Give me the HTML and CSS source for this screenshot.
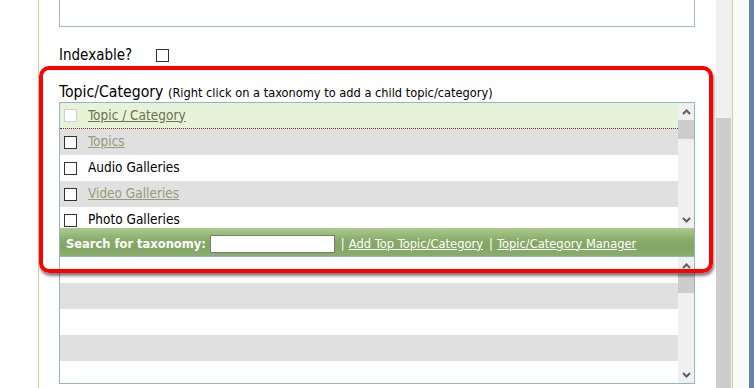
FILE: index.html
```html
<!DOCTYPE html>
<html lang="en">
<head>
    <meta charset="UTF-8">
    <title>Content Item - Taxonomy</title>
    <link rel="stylesheet" href="styles.css">
</head>
<body>
    <div class="screen">
        <div class="gutter"></div>

        <div class="panel">
            <div class="content">
                <!-- bottom of the description field -->
                <div class="desc-box"></div>

                <div class="field-row">
                    <span class="field-label">Indexable?</span>
                    <span class="cb"></span>
                </div>

                <div class="field-title">Topic/Category <span class="hint">(Right click on a taxonomy to add a child topic/category)</span></div>

                <div class="tax-box">
                    <div class="list list-top">
                        <div class="rows">
                            <div class="row head"><span class="cb disabled"></span><a href="#">Topic / Category</a></div>
                            <div class="row alt"><span class="cb"></span><a href="#">Topics</a></div>
                            <div class="row"><span class="cb"></span><span>Audio Galleries</span></div>
                            <div class="row alt"><span class="cb"></span><a href="#">Video Galleries</a></div>
                            <div class="row"><span class="cb"></span><span>Photo Galleries</span></div>
                        </div>
                        <div class="vscroll">
                            <div class="sb-btn"><svg width="9" height="6" viewBox="0 0 9 6"><path d="M1 5 L4.5 1.5 L8 5" fill="none" stroke="#5f5f5f" stroke-width="2"/></svg></div>
                            <div class="sb-thumb"></div>
                            <div class="sb-fill"></div>
                            <div class="sb-btn"><svg width="9" height="6" viewBox="0 0 9 6"><path d="M1 1 L4.5 4.5 L8 1" fill="none" stroke="#5f5f5f" stroke-width="2"/></svg></div>
                        </div>
                    </div>

                    <div class="tax-bar">
                        <b>Search for taxonomy:</b>
                        <span class="tax-search"></span>
                        <span class="sep">|</span>
                        <a href="#">Add Top Topic/Category</a>
                        <span class="sep">|</span>
                        <a href="#">Topic/Category Manager</a>
                    </div>

                    <div class="list list-bottom">
                        <div class="rows">
                            <div class="row"></div>
                            <div class="row alt"></div>
                            <div class="row"></div>
                            <div class="row alt"></div>
                            <div class="row"></div>
                        </div>
                        <div class="vscroll">
                            <div class="sb-btn"><svg width="9" height="6" viewBox="0 0 9 6"><path d="M1 5 L4.5 1.5 L8 5" fill="none" stroke="#5f5f5f" stroke-width="2"/></svg></div>
                            <div class="sb-thumb"></div>
                            <div class="sb-fill"></div>
                            <div class="sb-btn"><svg width="9" height="6" viewBox="0 0 9 6"><path d="M1 1 L4.5 4.5 L8 1" fill="none" stroke="#5f5f5f" stroke-width="2"/></svg></div>
                        </div>
                    </div>
                </div>
            </div>

            <div class="page-scroll"><div class="page-thumb"></div></div>
        </div>

        <div class="edge"></div>
        <div class="frame"></div>

        <!-- red highlight drawn over the screenshot -->
        <div class="callout"></div>
    </div>
</body>
</html>
```

FILE: styles.css
```css
* {
    box-sizing: border-box;
}
body {
    margin: 0;
    background: #fff;
    color: #000;
    font-family: "DejaVu Sans Condensed", "DejaVu Sans", sans-serif;
    font-stretch: condensed;
}
.screen {
    position: relative;
    display: flex;
    width: 754px;
    height: 388px;
    overflow: hidden;
}
.gutter {
    width: 38px;
    flex: none;
}
.panel {
    display: flex;
    width: 695px;
    flex: none;
    border-left: 1px solid #c4d79c;
    border-right: 1px solid #c4d79c;
}
.content {
    flex: 1;
    padding: 0 21px 0 20px;
}
.page-scroll {
    display: flex;
    flex-direction: column;
    width: 16px;
    padding-top: 118px;
    background: #f0f0f0;
}
.page-thumb {
    flex: 1;
    margin-right: 1px;
    background: #cdcdcd;
}
.edge {
    width: 16px;
    flex: none;
    background: #fafafa;
}
.frame {
    width: 5px;
    flex: none;
    background: #6683a5;
}
.desc-box {
    height: 27px;
    border: 1px solid #a0bccc;
    border-top: none;
}
.field-row {
    display: flex;
    align-items: center;
    height: 17px;
    margin-top: 20px;
}
.field-label {
    width: 97px;
    font-size: 15px;
    line-height: 17px;
}
.cb {
    width: 13px;
    height: 13px;
    flex: none;
    border: 1px solid #333;
    background: #fff;
}
.cb.disabled {
    border-color: #cfcfcf;
}
.field-title {
    margin-top: 19px;
    font-size: 15.7px;
    line-height: 18px;
    white-space: nowrap;
}
.hint {
    font-size: 12.7px;
}
.tax-box {
    border: 1px solid #96b4c8;
}
.list {
    display: flex;
}
.list-top {
    height: 125px;
}
.list-bottom {
    height: 126px;
}
.rows {
    flex: 1;
    overflow: hidden;
}
.row {
    display: flex;
    align-items: center;
    height: 26px;
    padding-left: 4px;
    font-size: 13.5px;
    white-space: nowrap;
}
.row .cb {
    margin-right: 11px;
}
.row a,
.row span + span {
    margin-top: -2px;
}
.row.head {
    background: #e7f3d8;
    border-bottom: 1px dotted #8b1a1a;
}
.row.alt {
    background: #e0e0e0;
}
.row a {
    color: #9a9a7a;
    text-decoration: underline;
}
.row.head a {
    color: #6e6e50;
}
.vscroll {
    display: flex;
    flex-direction: column;
    width: 16px;
    background: #f0f0f0;
}
.sb-btn {
    display: flex;
    align-items: center;
    justify-content: center;
    height: 17px;
}
.sb-thumb {
    height: 19px;
    background: #cdcdcd;
}
.sb-fill {
    flex: 1;
}
.tax-bar {
    display: flex;
    align-items: center;
    height: 29px;
    padding: 3px 0 0 6px;
    border-bottom: 1px solid #96b4c8;
    background: linear-gradient(#abcb8f, #88aa68 45%, #84a664 70%, #8cae6c);
    color: #fff;
    font-family: "DejaVu Sans", sans-serif;
    font-stretch: normal;
    font-size: 11.5px;
    white-space: nowrap;
}
.tax-bar b {
    margin-right: 4px;
}
.tax-search {
    width: 125px;
    height: 18px;
    border: 1px solid #7a7a7a;
    background: #fff;
}
.sep {
    margin: 0 4px 0 6px;
}
.tax-bar a {
    color: #fff;
    text-decoration: underline;
}
.callout {
    position: absolute;
    left: 39px;
    top: 66px;
    width: 674px;
    height: 207px;
    border: 4px solid #f00;
    border-radius: 10px;
    box-shadow: 1px 3px 3px rgba(0, 0, 0, 0.5);
}
```
